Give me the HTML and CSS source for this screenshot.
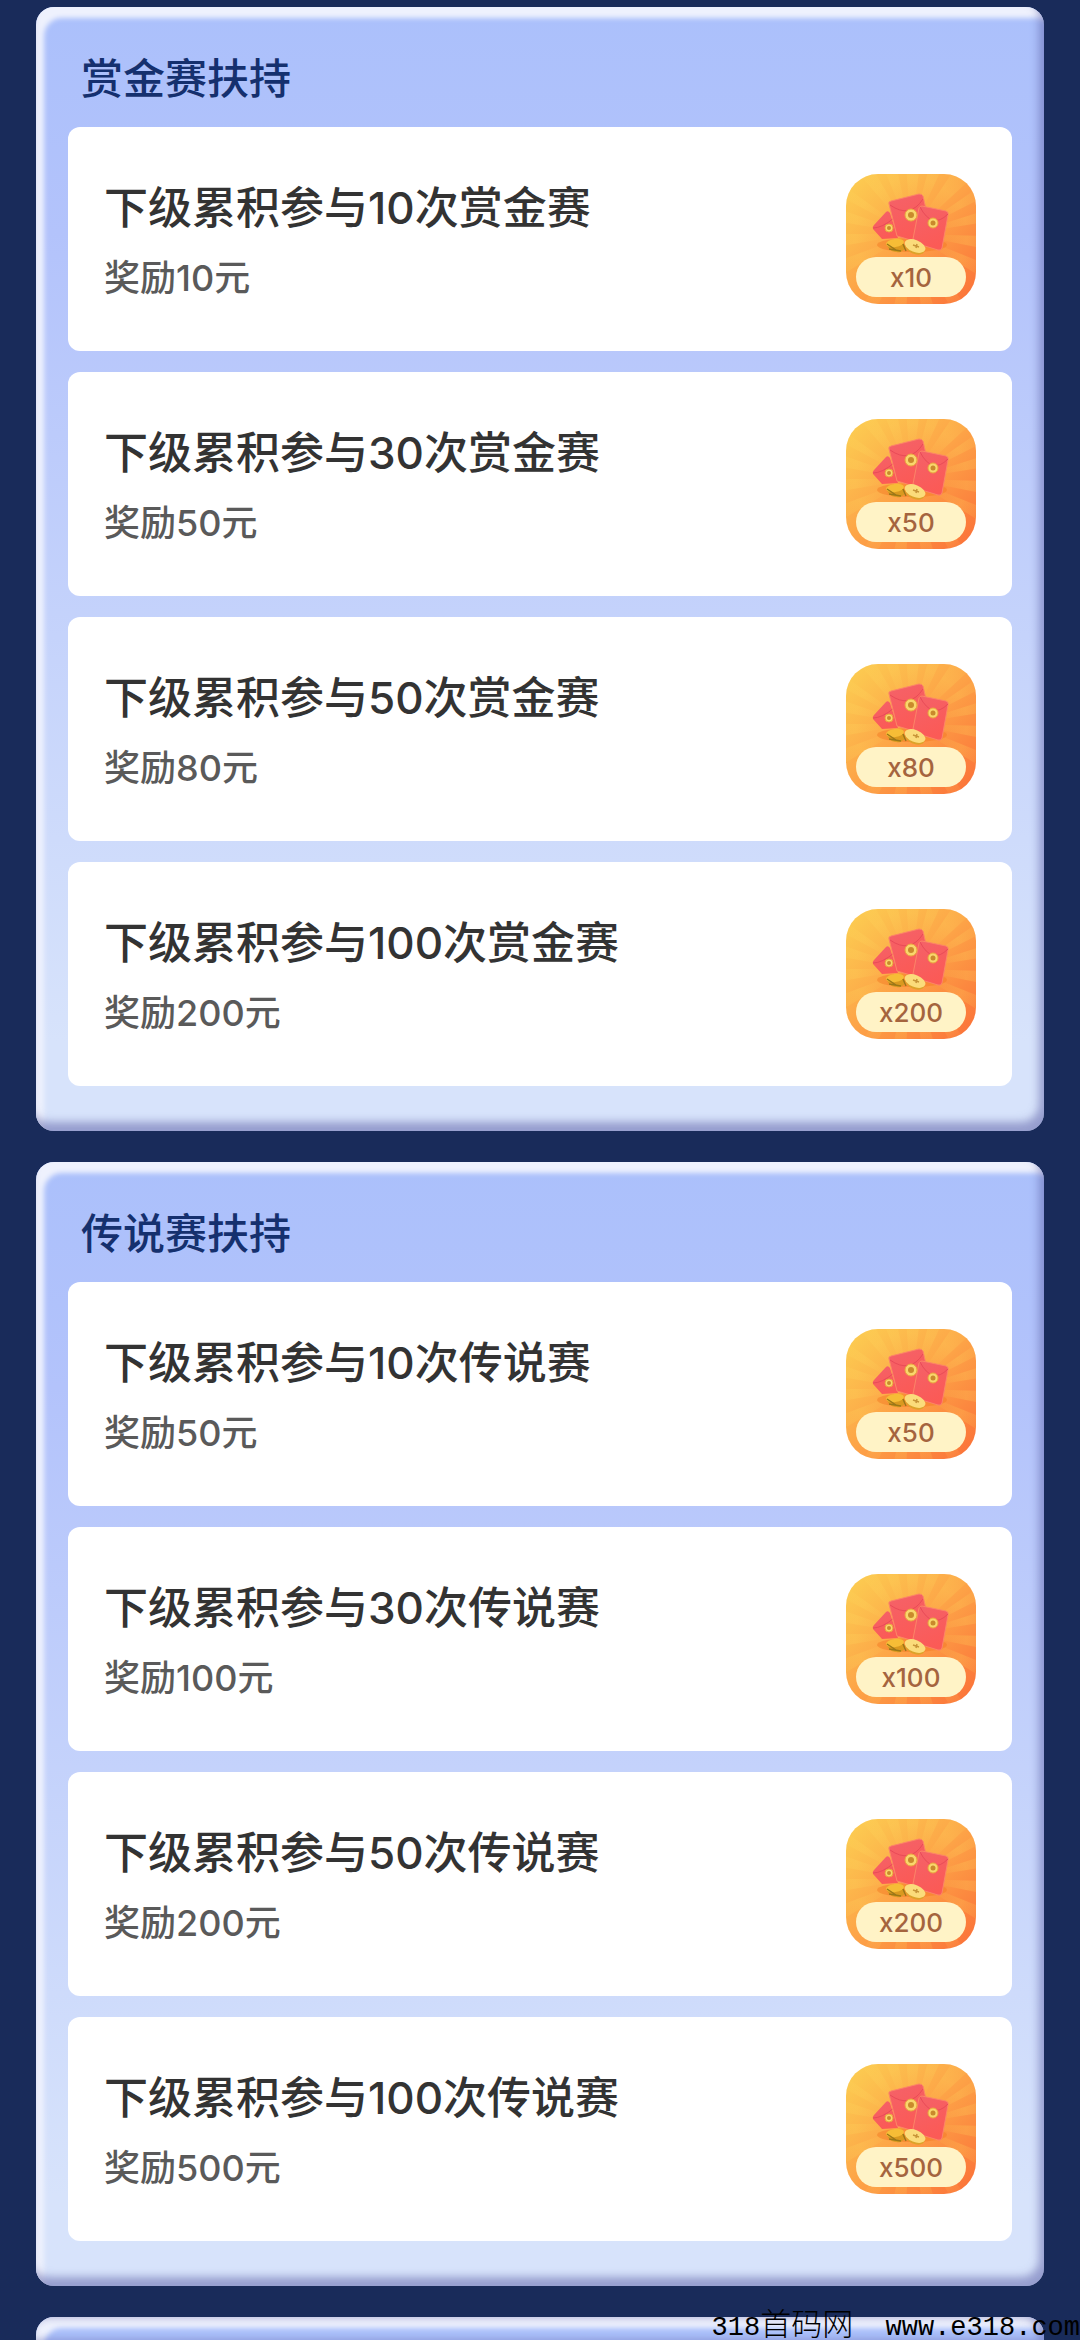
FILE: index.html
```html
<!DOCTYPE html>
<html lang="zh-CN">
<head>
    <meta charset="UTF-8">
    <meta name="viewport" content="width=device-width, initial-scale=1.0">
    <title>赛事扶持</title>
    <link rel="stylesheet" href="styles.css">
</head>
<body>
    <!-- 红包图标 -->
    <svg class="defs" width="0" height="0" aria-hidden="true">
        <defs>
            <linearGradient id="bg" x1="0" y1="0" x2="1" y2="1">
                <stop offset="0" stop-color="#fcd052"/>
                <stop offset="0.5" stop-color="#fda347"/>
                <stop offset="1" stop-color="#fb6f38"/>
            </linearGradient>
            <linearGradient id="red" x1="0" y1="0" x2="0.4" y2="1">
                <stop offset="0" stop-color="#f4626a"/>
                <stop offset="1" stop-color="#fb5a56"/>
            </linearGradient>
            <radialGradient id="rayFade" gradientUnits="userSpaceOnUse" cx="65" cy="60" r="80">
                <stop offset="0.3" stop-color="#ffd65c" stop-opacity="0"/>
                <stop offset="0.7" stop-color="#ffd65c" stop-opacity="0.25"/>
                <stop offset="1" stop-color="#ffd65c" stop-opacity="0.1"/>
            </radialGradient>
        </defs>
        <symbol id="packet" viewBox="0 0 130 130">
            <rect width="130" height="130" fill="url(#bg)"/>
            <path fill="url(#rayFade)" d="M65 60 60-10H74ZM65 60 84-10H98ZM65 60 112-10 130 0ZM65 60 140 8V22ZM65 60 140 36V48ZM65 60 140 62V75ZM65 60 140 90V106ZM65 60 50-10H36ZM65 60 24-10 8-6ZM65 60-10 6V20ZM65 60-10 34V47ZM65 60-10 60V73ZM65 60-10 88V104ZM65 60 10 140H28ZM65 60 46 140H60ZM65 60 76 140H90ZM65 60 108 140H126Z"/>
            <ellipse cx="66" cy="71" rx="35" ry="7" fill="#f47a24" opacity="0.5"/>
            <path d="M27 55Q26 53 28 51L40 38Q42 36 44 39L52 64 36 65Z" fill="url(#red)"/>
            <path d="M27 54Q36 54 48 44" fill="none" stroke="#e84b58" stroke-width="1"/>
            <path d="M43 30Q42 28 45 27L73 20Q76 20 77 22L80 35 68 67 51 62Z" fill="url(#red)" stroke="#fb8567" stroke-width="1"/>
            <path d="M44 31Q64 45 77 25" fill="none" stroke="#e84b58" stroke-width="1"/>
            <path d="M73 34Q74 32 76 32L100 37Q103 38 102 41L96 74Q95 77 92 76L69 69Q67 68 67 65Z" fill="url(#red)" stroke="#fb8567" stroke-width="1"/>
            <path d="M74 33Q86 56 102 40" fill="none" stroke="#e84b58" stroke-width="1"/>
            <g fill="#f9d66d" stroke="#e9a83d" stroke-width="1">
                <circle cx="43" cy="54" r="4"/>
                <circle cx="65" cy="41" r="6"/>
                <circle cx="87" cy="49" r="5"/>
            </g>
            <g fill="#c98a2c">
                <circle cx="43" cy="54" r="2"/>
                <circle cx="65" cy="41" r="3"/>
                <circle cx="87" cy="49" r="2.5"/>
            </g>
            <ellipse cx="50" cy="72" rx="9" ry="6" fill="#d99a20" transform="rotate(15 50 72)"/>
            <ellipse cx="49" cy="69" rx="9" ry="4" fill="#f6bd36" transform="rotate(-8 49 69)"/>
            <path d="M41 70 50 76M43 75 55 77M57 70 60 77" stroke="#9a7718" stroke-width="1.5"/>
            <ellipse cx="69" cy="74" rx="10" ry="6" fill="#dda32a" transform="rotate(22 69 74)"/>
            <ellipse cx="69" cy="72" rx="11" ry="6" fill="#fbdc7b" transform="rotate(22 69 72)"/>
            <path d="M67 71 73 73M71 70 70 74" stroke="#c89538" stroke-width="1.5"/>
        </symbol>
    </svg>

    <main class="page">
        <section class="panel">
            <h2 class="panel-title">赏金赛扶持</h2>
            <ul class="list">
                <li class="card">
                    <div class="info">
                        <h3 class="name">下级累积参与10次赏金赛</h3>
                        <p class="reward">奖励10元</p>
                    </div>
                    <div class="badge"><svg class="badge-icon"><use href="#packet"/></svg><span class="count">x10</span></div>
                </li>
                <li class="card">
                    <div class="info">
                        <h3 class="name">下级累积参与30次赏金赛</h3>
                        <p class="reward">奖励50元</p>
                    </div>
                    <div class="badge"><svg class="badge-icon"><use href="#packet"/></svg><span class="count">x50</span></div>
                </li>
                <li class="card">
                    <div class="info">
                        <h3 class="name">下级累积参与50次赏金赛</h3>
                        <p class="reward">奖励80元</p>
                    </div>
                    <div class="badge"><svg class="badge-icon"><use href="#packet"/></svg><span class="count">x80</span></div>
                </li>
                <li class="card">
                    <div class="info">
                        <h3 class="name">下级累积参与100次赏金赛</h3>
                        <p class="reward">奖励200元</p>
                    </div>
                    <div class="badge"><svg class="badge-icon"><use href="#packet"/></svg><span class="count">x200</span></div>
                </li>
            </ul>
        </section>

        <section class="panel">
            <h2 class="panel-title">传说赛扶持</h2>
            <ul class="list">
                <li class="card">
                    <div class="info">
                        <h3 class="name">下级累积参与10次传说赛</h3>
                        <p class="reward">奖励50元</p>
                    </div>
                    <div class="badge"><svg class="badge-icon"><use href="#packet"/></svg><span class="count">x50</span></div>
                </li>
                <li class="card">
                    <div class="info">
                        <h3 class="name">下级累积参与30次传说赛</h3>
                        <p class="reward">奖励100元</p>
                    </div>
                    <div class="badge"><svg class="badge-icon"><use href="#packet"/></svg><span class="count">x100</span></div>
                </li>
                <li class="card">
                    <div class="info">
                        <h3 class="name">下级累积参与50次传说赛</h3>
                        <p class="reward">奖励200元</p>
                    </div>
                    <div class="badge"><svg class="badge-icon"><use href="#packet"/></svg><span class="count">x200</span></div>
                </li>
                <li class="card">
                    <div class="info">
                        <h3 class="name">下级累积参与100次传说赛</h3>
                        <p class="reward">奖励500元</p>
                    </div>
                    <div class="badge"><svg class="badge-icon"><use href="#packet"/></svg><span class="count">x500</span></div>
                </li>
            </ul>
        </section>

        <section class="panel panel-next"></section>
    </main>

    <div class="watermark">318<span class="watermark-cn">首码网</span>&nbsp; www.e318.com</div>
</body>
</html>
```
FILE: styles.css
```css
* {
    box-sizing: border-box;
    margin: 0;
    padding: 0;
}

body {
    position: relative;
    height: 100vh;
    overflow: hidden;
    background: #192b5a;
    font-family: Inter, "Noto Sans CJK SC", sans-serif;
}

.defs {
    position: absolute;
}

.page {
    display: flex;
    flex-direction: column;
    gap: 31px;
    height: 100vh;
    padding: 7px 36px 0;
}

.panel {
    flex-shrink: 0;
    padding: 42px 32px 45px;
    border-radius: 18px;
    background: linear-gradient(#abc0fb, #b3c3fb 20%, #d7e3fb 92%);
    box-shadow: inset -5px -9px 8px rgba(96, 100, 170, 0.55), inset 8px 11px 5px #eef1fd;
}

/* 下一块只露出顶部 */
.panel-next {
    flex: 1 0 0;
    padding: 0;
    border-radius: 18px 18px 0 0;
    box-shadow: inset -5px 0 8px rgba(96, 100, 170, 0.55), inset 8px 11px 5px #eef1fd;
    background: #abc0fb;
}

.panel-title {
    padding-left: 13px;
    margin-bottom: 18px;
    font-size: 42px;
    font-weight: 500;
    line-height: 60px;
    color: #15306e;
}

.list {
    display: flex;
    flex-direction: column;
    gap: 21px;
    list-style: none;
}

.card {
    display: flex;
    align-items: center;
    justify-content: space-between;
    height: 224px;
    padding: 0 36px;
    border-radius: 12px;
    background: #fff;
}

.info {
    padding-top: 8px;
}

.name {
    font-size: 44px;
    font-weight: 500;
    line-height: 70px;
    color: #333;
}

.reward {
    font-size: 36px;
    font-weight: 500;
    line-height: 70px;
    color: #5a5a5a;
}

/* 图标和数量叠在同一格 */
.badge {
    display: grid;
    width: 130px;
    height: 130px;
    border-radius: 32px;
    overflow: hidden;
}

.badge-icon {
    grid-area: 1 / 1;
    width: 130px;
    height: 130px;
}

.count {
    grid-area: 1 / 1;
    align-self: end;
    justify-self: center;
    width: 110px;
    padding-top: 2px;
    margin-bottom: 7px;
    border-radius: 20px;
    background: #fff3c6;
    font-size: 26px;
    font-weight: 500;
    line-height: 38px;
    text-align: center;
    color: #a5643e;
}

.watermark {
    position: absolute;
    right: 0;
    bottom: 0;
    font-family: "Liberation Mono", "Noto Sans CJK SC", monospace;
    font-size: 27px;
    line-height: 24px;
    white-space: nowrap;
    color: #000;
}

.watermark-cn {
    font-size: 31px;
    font-weight: 300;
}
```
